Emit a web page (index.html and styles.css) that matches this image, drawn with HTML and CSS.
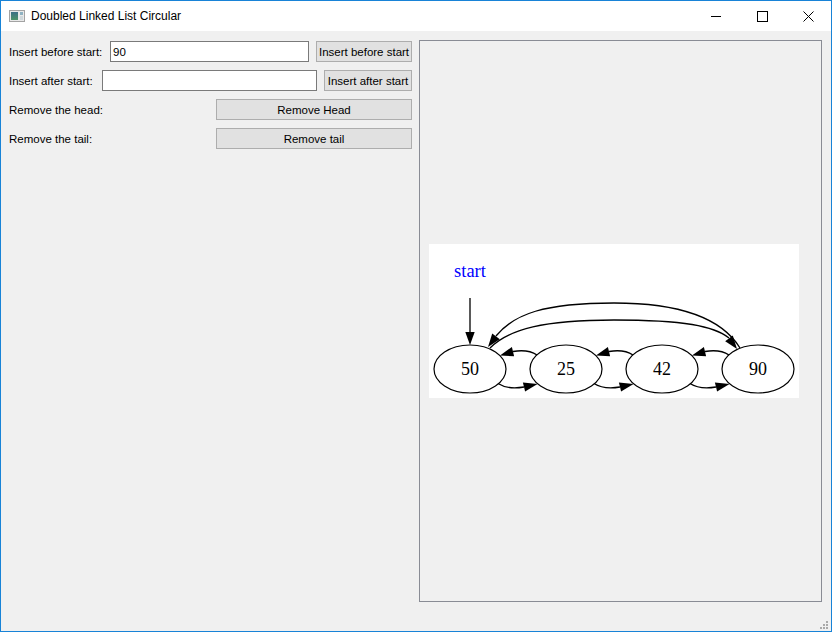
FILE: index.html
```html
<!DOCTYPE html>
<html>
<head>
<meta charset="utf-8">
<title>Doubled Linked List Circular</title>
<link rel="stylesheet" href="styles.css">
</head>
<body>
<div class="window">
  <div class="titlebar">
    <svg class="app-icon" width="16" height="16" viewBox="0 0 16 16">
      <defs>
        <linearGradient id="ig" x1="0" y1="0" x2="0" y2="1">
          <stop offset="0" stop-color="#3d6f86"/>
          <stop offset="1" stop-color="#4f9468"/>
        </linearGradient>
      </defs>
      <rect x="0.5" y="2.5" width="15" height="11" fill="#e9e9e9" stroke="#a3a3a3"/>
      <rect x="2" y="4" width="7" height="8" fill="url(#ig)"/>
      <rect x="11" y="4" width="3" height="3" fill="#8fb2c2"/>
      <rect x="11" y="8" width="3" height="4" fill="#cfd8dc"/>
    </svg>
    <span class="title">Doubled Linked List Circular</span>
    <div class="controls">
      <div class="ctl"><svg width="10" height="10" viewBox="0 0 10 10"><line x1="0" y1="5.5" x2="10" y2="5.5" stroke="#000" stroke-width="1"/></svg></div>
      <div class="ctl"><svg width="11" height="11" viewBox="0 0 11 11"><rect x="0.5" y="0.5" width="10" height="10" fill="none" stroke="#000" stroke-width="1"/></svg></div>
      <div class="ctl"><svg width="11" height="11" viewBox="0 0 11 11"><path d="M0.5 0.5 L10.5 10.5 M10.5 0.5 L0.5 10.5" stroke="#000" stroke-width="1" fill="none"/></svg></div>
    </div>
  </div>
  <div class="client">
    <div class="main">
      <div class="left">
        <div class="row">
          <span class="lbl lbl-before">Insert before start:</span>
          <input class="field" type="text" value="90">
          <button class="btn btn-before">Insert before start</button>
        </div>
        <div class="row">
          <span class="lbl lbl-after">Insert after start:</span>
          <input class="field" type="text" value="">
          <button class="btn btn-after">Insert after start</button>
        </div>
        <div class="row">
          <span class="lbl">Remove the head:</span>
          <button class="btn btn-wide">Remove Head</button>
        </div>
        <div class="row">
          <span class="lbl">Remove the tail:</span>
          <button class="btn btn-wide">Remove tail</button>
        </div>
      </div>
      <div class="frame">
        <svg class="graph" width="370" height="154" viewBox="0 0 370 154">
          <rect x="0" y="0" width="370" height="154" fill="#fff"/>
          <text class="start" x="41" y="33" text-anchor="middle">start</text>
          <line x1="41" y1="54" x2="41" y2="88" stroke="#000" stroke-width="1.3"/>
          <polygon points="36.3,88 45.7,88 41,101" fill="#000"/>

          <g fill="none" stroke="#000" stroke-width="1.2">
            <ellipse cx="41" cy="125" rx="36" ry="24"/>
            <ellipse cx="137" cy="125" rx="36" ry="24"/>
            <ellipse cx="233" cy="125" rx="36" ry="24"/>
            <ellipse cx="329" cy="125" rx="36" ry="24"/>
          </g>
          <g class="num" text-anchor="middle">
            <text x="41" y="131">50</text>
            <text x="137" y="131">25</text>
            <text x="233" y="131">42</text>
            <text x="329" y="131">90</text>
          </g>

          <g>
            <path d="M69,139.5 C76,144 86,144.5 95,143" fill="none" stroke="#000" stroke-width="1.3"/>
            <polygon points="108.5,140 96.1,147.6 93.9,138.4" fill="#000"/>
            <path d="M108,111 C102,107 93,106 84,107.5" fill="none" stroke="#000" stroke-width="1.3"/>
            <polygon points="71,111.5 85.1,112.2 82.9,103.0" fill="#000"/>
          </g>
          <g transform="translate(96,0)">
            <path d="M69,139.5 C76,144 86,144.5 95,143" fill="none" stroke="#000" stroke-width="1.3"/>
            <polygon points="108.5,140 96.1,147.6 93.9,138.4" fill="#000"/>
            <path d="M108,111 C102,107 93,106 84,107.5" fill="none" stroke="#000" stroke-width="1.3"/>
            <polygon points="71,111.5 85.1,112.2 82.9,103.0" fill="#000"/>
          </g>
          <g transform="translate(192,0)">
            <path d="M69,139.5 C76,144 86,144.5 95,143" fill="none" stroke="#000" stroke-width="1.3"/>
            <polygon points="108.5,140 96.1,147.6 93.9,138.4" fill="#000"/>
            <path d="M108,111 C102,107 93,106 84,107.5" fill="none" stroke="#000" stroke-width="1.3"/>
            <polygon points="71,111.5 85.1,112.2 82.9,103.0" fill="#000"/>
          </g>

          <path d="M311,104 C295,78 260,59 185,59 C115,59 85,70 67,92" fill="none" stroke="#000" stroke-width="1.3"/>
          <polygon points="59,103 70.8,95.2 63.2,89.6" fill="#000"/>
          <path d="M61,104 C80,85 115,76 185,76 C255,76 285,82 300,94" fill="none" stroke="#000" stroke-width="1.3"/>
          <polygon points="308,105 303.8,91.6 296.2,97.2" fill="#000"/>
        </svg>
      </div>
    </div>
    <div class="status">
      <svg class="grip" width="10" height="10" viewBox="0 0 10 10">
        <g fill="#a9a9a9">
          <rect x="7" y="1" width="2" height="2"/>
          <rect x="4" y="4" width="2" height="2"/>
          <rect x="7" y="4" width="2" height="2"/>
          <rect x="1" y="7" width="2" height="2"/>
          <rect x="4" y="7" width="2" height="2"/>
          <rect x="7" y="7" width="2" height="2"/>
        </g>
      </svg>
    </div>
  </div>
</div>
</body>
</html>
```

FILE: styles.css
```css
html, body {
  margin: 0;
  padding: 0;
}

body {
  width: 832px;
  height: 632px;
  overflow: hidden;
  background: #f0f0f0;
  font-family: "Liberation Sans", Arial, sans-serif;
  color: #000;
}

.window {
  box-sizing: border-box;
  width: 832px;
  height: 632px;
  border: 1px solid #1883d7;
  display: flex;
  flex-direction: column;
  background: #f0f0f0;
}

.titlebar {
  flex: none;
  height: 30px;
  background: #fff;
  display: flex;
  align-items: center;
}

.app-icon {
  display: block;
  margin-left: 8px;
  flex: none;
}

.title {
  margin-left: 6px;
  font-size: 12px;
  color: #000;
  white-space: nowrap;
}

.controls {
  margin-left: auto;
  display: flex;
  height: 30px;
}

.ctl {
  width: 46px;
  height: 30px;
  display: flex;
  align-items: center;
  justify-content: center;
}

.ctl svg {
  display: block;
}

.client {
  flex: 1;
  display: flex;
  flex-direction: column;
}

.main {
  display: grid;
  grid-template-columns: 403px 403px;
  column-gap: 7px;
  padding: 9px 9px 0 8px;
  height: 562px;
}

.left {
  padding-top: 1px;
  display: flex;
  flex-direction: column;
  gap: 8px;
}

.row {
  display: flex;
  align-items: center;
  height: 21px;
  gap: 7px;
}

.lbl {
  flex: none;
  font-size: 11.5px;
  white-space: nowrap;
}

.lbl-before {
  width: 94px;
}

.lbl-after {
  width: 86px;
}

.field {
  flex: 1;
  min-width: 0;
  box-sizing: border-box;
  height: 21px;
  margin: 0;
  padding: 0 2px;
  border: 1px solid #7a7a7a;
  background: #fff;
  font-family: inherit;
  font-size: 11.5px;
  color: #000;
  outline: none;
}

.btn {
  flex: none;
  box-sizing: border-box;
  height: 21px;
  margin: 0;
  padding: 0;
  border: 1px solid #adadad;
  background: #e1e1e1;
  font-family: inherit;
  font-size: 11.5px;
  color: #000;
  white-space: nowrap;
}

.btn-before {
  width: 96px;
}

.btn-after {
  width: 88px;
}

.btn-wide {
  width: 196px;
  margin-left: auto;
}

.frame {
  box-sizing: border-box;
  height: 562px;
  border: 1px solid #898c95;
  display: flex;
  align-items: center;
  padding-left: 9px;
}

.graph {
  display: block;
}

.graph .start {
  fill: #0000ff;
  font-family: "Liberation Serif", "Times New Roman", serif;
  font-size: 18.5px;
}

.graph .num {
  fill: #000;
  font-family: "Liberation Serif", "Times New Roman", serif;
  font-size: 18px;
}

.status {
  flex: 1;
  display: flex;
  justify-content: flex-end;
  align-items: flex-end;
}

.grip {
  display: block;
  margin: 0 2px 1px 0;
}
```
